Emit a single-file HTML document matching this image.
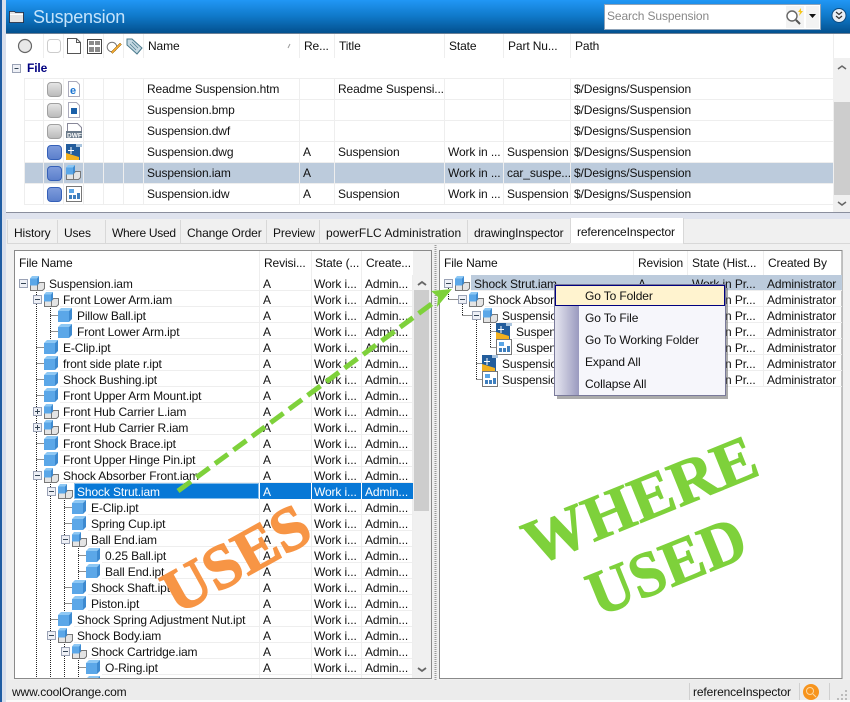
<!DOCTYPE html>
<html><head><meta charset="utf-8"><title>Suspension</title>
<style>
html,body{margin:0;padding:0;background:#f0f0f0;width:850px;height:702px;overflow:hidden}
svg{display:block}
text{font-family:"Liberation Sans",sans-serif;font-size:12px;fill:#111;letter-spacing:-.12px}
.w text{fill:#fff}
.ln{stroke:#eeeeee;stroke-width:1;fill:none}
.dot{stroke:#222;stroke-width:1;stroke-dasharray:1 1;fill:none}
</style></head><body>
<svg width="850" height="702" viewBox="0 0 850 702" xmlns="http://www.w3.org/2000/svg">
<defs>
<linearGradient id="tb" x1="0" y1="0" x2="0" y2="1"><stop offset="0" stop-color="#2197f5"/><stop offset=".5" stop-color="#0f78c8"/><stop offset="1" stop-color="#03508e"/></linearGradient>
<linearGradient id="gr" x1="0" y1="0" x2="0" y2="1"><stop offset="0" stop-color="#e6e6e6"/><stop offset="1" stop-color="#b9b9b9"/></linearGradient>
<linearGradient id="bl" x1="0" y1="0" x2="0" y2="1"><stop offset="0" stop-color="#7f9cdc"/><stop offset="1" stop-color="#5b7fcb"/></linearGradient>
<linearGradient id="gut" x1="0" y1="0" x2="1" y2="0"><stop offset="0" stop-color="#e6e6f0"/><stop offset="1" stop-color="#9a9abf"/></linearGradient>
<clipPath id="cl"><rect x="15" y="251" width="398" height="427"/></clipPath>
<clipPath id="cr"><rect x="440" y="251" width="402" height="427"/></clipPath>
<symbol id="part" width="14" height="14" viewBox="0 0 14 14"><path d="M0 3h11v11H0z" fill="#5ba7e8"/><path d="M0 3 3 0h11l-3 3z" fill="#8ec8f4"/><path d="M11 3l3-3v11l-3 3z" fill="#3d8ad0"/></symbol>
<symbol id="asm" width="15" height="15" viewBox="0 0 15 15"><path d="M.5 8.500h7v6h-7z" fill="#e4e4e4" stroke="#777"/><path d="M7.500 14.500v-6l2-2h5v6l-2 2z" fill="#e4e4e4" stroke="#777"/><path d="M0 2.500h7v7H0z" fill="#5ba7e8"/><path d="M0 2.500 2 0h7L7 2.500z" fill="#8ec8f4"/><path d="M7 2.500 9 0v7L7 9.500z" fill="#3d8ad0"/></symbol>
<symbol id="dwg" width="16" height="16" viewBox="0 0 16 16"><path d="M0 0h14v16H0z" fill="#235d9c"/><path d="M0 16V9l13 4v3z" fill="#f2b01e"/><path d="M5 3v7M2 6.500h6" stroke="#fff"/><path d="M10 0h6v3h-6z" fill="#a9c4de"/></symbol>
<symbol id="idw" width="16" height="16" viewBox="0 0 16 16"><path d="M.5.500h15v15H.5z" fill="#fff" stroke="#777"/><path d="M3 3h5v4H3z" fill="#5aa5e6"/><path d="M3 9h3v4H3zM7 9h3v4H7zM11 7h3v6h-3z" fill="#3f7fbe"/></symbol>
<symbol id="minus" width="9" height="9" viewBox="0 0 9 9"><rect x=".5" y=".5" width="8" height="8" fill="#eef0f6" stroke="#9aa2b5"/><path d="M2 4.500h5" stroke="#345"/></symbol>
<symbol id="plus" width="9" height="9" viewBox="0 0 9 9"><rect x=".5" y=".5" width="8" height="8" fill="#eef0f6" stroke="#9aa2b5"/><path d="M2 4.500h5M4.500 2v5" stroke="#345"/></symbol>
</defs>

<!-- frame -->
<rect width="850" height="702" fill="#f0f0f0"/>
<rect x="0" y="0" width="6" height="702" fill="#d9dfec"/>
<rect x="0" y="0" width="2" height="702" fill="#1f5da3"/>
<rect x="6" y="213" width="844" height="6" fill="#dfe3ee"/>

<!-- title bar -->
<rect x="6" y="0" width="844" height="33" fill="url(#tb)"/>
<rect x="6" y="33" width="844" height="1" fill="#6b7f95"/>
<path d="M9.500 11.500h5l1 1h8v10h-14z" fill="#e4e4e4" stroke="#223" stroke-width=".8"/>
<path d="M10 14.500h13" stroke="#fff"/>
<text x="33" y="23" style="font-size:18px;letter-spacing:-.2px;fill:#c4e3fb">Suspension</text>
<rect x="604.500" y="4.500" width="216" height="25" fill="#fff" stroke="#8fa3b8"/>
<text x="607" y="20" style="fill:#888">Search Suspension</text>
<rect x="786" y="6" width="18" height="22" fill="#f3f3f3"/>
<circle cx="792" cy="16" r="5" fill="#fff" stroke="#666" stroke-width="1.400"/>
<path d="M796 20l4 4" stroke="#555" stroke-width="2"/>
<path d="M801 8l-3 4h2l-1 4 4-5h-2z" fill="#f5c518"/>
<rect x="806" y="6" width="13" height="22" fill="#f3f3f3"/>
<path d="M809 14h7l-3.500 4z" fill="#111"/>
<circle cx="839" cy="15.500" r="7" fill="#e8eef5" stroke="#0b4a80"/>
<path d="M836 12l3 2.500 3-2.500M836 16l3 2.500 3-2.500" fill="none" stroke="#333" stroke-width="1.200"/>

<!-- top list -->
<rect x="6" y="34" width="827" height="178" fill="#fff"/>
<rect x="833" y="34" width="17" height="24" fill="#fff"/>
<rect x="833" y="58" width="17" height="154" fill="#f0f0f0"/>
<rect x="834" y="102" width="16" height="93" fill="#cdcdcd"/>
<path d="M838 69l4-3 4 3M838 202l4 3 4-3" fill="none" stroke="#666" stroke-width="1.500"/>
<rect x="6" y="212" width="844" height="1" fill="#8a8f9e"/>
<path class="ln" d="M43.500 34v24M63.500 34v24M83.500 34v24M103.500 34v24M123.500 34v24M143.500 34v24M299.500 34v24M334.500 34v24M444.500 34v24M503.500 34v24M570.500 34v24M833.500 34v24"/>
<circle cx="25" cy="46" r="6.500" fill="#e8e8e8" stroke="#666" stroke-width="1.200"/>
<rect x="47.500" y="39.500" width="13" height="13" rx="3" fill="#fff" stroke="#ccc"/>
<path d="M67.500 38.500h9l4 4v11h-13z" fill="#fff" stroke="#555"/><path d="M76.500 38.500v4h4" fill="none" stroke="#555"/>
<rect x="87.500" y="39.500" width="14" height="14" fill="#fff" stroke="#444"/><path d="M89 41h5v4h-5zM95 41h5v4h-5zM89 47h5v5h-5zM95 47h5v5h-5z" fill="#8a8a8a"/>
<circle cx="112" cy="47" r="4.800" fill="#fff" stroke="#777"/><path d="M111 52l9-9 1.500 1.500-9 9z" fill="#f0a830" stroke="#8a5c10" stroke-width=".5"/>
<path d="M127 39h5l10 9-5 6-10-9z" fill="#c4d8e2" stroke="#4a7a8c"/><path d="M130 44l6 6M132 42l6 6" stroke="#4a7a8c" stroke-width=".7"/>
<text x="148" y="50">Name</text><path d="M288 48l2-4" stroke="#999"/>
<text x="304" y="50">Re...</text><text x="339" y="50">Title</text><text x="449" y="50">State</text><text x="508" y="50">Part Nu...</text><text x="575" y="50">Path</text>
<rect x="12.500" y="64.500" width="8" height="8" fill="#eef0f6" stroke="#9aa2b5"/><path d="M14.500 68.500h4" stroke="#345"/>
<text x="27" y="72" style="font-weight:bold;fill:#000080">File</text>
<rect x="24" y="163" width="809" height="20" fill="#bccbdc"/>
<path class="ln" d="M24 78.500h809M24 99.500h809M24 120.500h809M24 141.500h809M24 162.500h809M24 183.500h809M24 204.500h809"/>
<path class="ln" d="M24.500 79v125M43.500 79v125M63.500 79v125M83.500 79v125M103.500 79v125M123.500 79v125M143.500 79v125M299.500 79v125M334.500 79v125M444.500 79v125M503.500 79v125M570.500 79v125"/>
<g stroke-width="1">
<rect x="47.500" y="82.500" width="14" height="14" rx="3.500" fill="url(#gr)" stroke="#a0a0a0"/>
<rect x="47.500" y="103.500" width="14" height="14" rx="3.500" fill="url(#gr)" stroke="#a0a0a0"/>
<rect x="47.500" y="124.500" width="14" height="14" rx="3.500" fill="url(#gr)" stroke="#a0a0a0"/>
<rect x="47.500" y="145.500" width="14" height="14" rx="3.500" fill="url(#bl)" stroke="#3560b8"/>
<rect x="47.500" y="166.500" width="14" height="14" rx="3.500" fill="url(#bl)" stroke="#3560b8"/>
<rect x="47.500" y="187.500" width="14" height="14" rx="3.500" fill="url(#bl)" stroke="#3560b8"/>
</g>
<path d="M68.500 81.500h8l3 3v12h-11z" fill="#fff" stroke="#aab"/><text x="70" y="94" style="font-size:11px;font-weight:bold;fill:#1a73d0">e</text>
<path d="M68.500 102.500h8l3 3v12h-11z" fill="#fff" stroke="#aab"/><rect x="71" y="108" width="6" height="6" fill="#1a5fa8"/>
<path d="M67.500 123.500h10l4 4v10h-14z" fill="#fff" stroke="#889"/><rect x="66" y="131" width="16" height="7" fill="#6a7a8a"/><text x="67" y="137.500" style="font-size:6.500px;font-weight:bold;fill:#fff;letter-spacing:0">DWF</text>
<use href="#dwg" x="66" y="144"/>
<use href="#asm" x="66" y="165"/>
<use href="#idw" x="66" y="186"/>
<text x="147" y="93">Readme Suspension.htm</text><text x="338" y="93">Readme Suspensi...</text><text x="574" y="93">$/Designs/Suspension</text>
<text x="147" y="114">Suspension.bmp</text><text x="574" y="114">$/Designs/Suspension</text>
<text x="147" y="135">Suspension.dwf</text><text x="574" y="135">$/Designs/Suspension</text>
<text x="147" y="156">Suspension.dwg</text><text x="303" y="156">A</text><text x="338" y="156">Suspension</text><text x="448" y="156">Work in ...</text><text x="507" y="156">Suspension</text><text x="574" y="156">$/Designs/Suspension</text>
<text x="147" y="177">Suspension.iam</text><text x="303" y="177">A</text><text x="448" y="177">Work in ...</text><text x="507" y="177">car_suspe...</text><text x="574" y="177">$/Designs/Suspension</text>
<text x="147" y="198">Suspension.idw</text><text x="303" y="198">A</text><text x="338" y="198">Suspension</text><text x="448" y="198">Work in ...</text><text x="507" y="198">Suspension</text><text x="574" y="198">$/Designs/Suspension</text>

<!-- tabs -->
<rect x="7" y="219" width="843" height="24" fill="#f0f0f0"/>
<rect x="570" y="218" width="113" height="25" fill="#fff"/>
<path d="M7.500 220v23M57.500 220v23M105.500 220v23M180.500 220v23M266.500 220v23M319.500 220v23M467.500 220v23M570.500 218v25M683.500 218v25" stroke="#d8d8d8" fill="none"/>
<path d="M7 243.500h563M683 243.500h167" stroke="#d8d8d8"/>
<text x="14" y="237">History</text><text x="64" y="237">Uses</text><text x="112" y="237" style="letter-spacing:-.3px">Where Used</text><text x="187" y="237">Change Order</text><text x="273" y="237">Preview</text><text x="326" y="237" style="letter-spacing:.05px">powerFLC Administration</text><text x="474" y="237">drawingInspector</text><text x="577" y="236">referenceInspector</text>

<!-- left panel -->
<rect x="14.500" y="250.500" width="417" height="428" fill="#fff" stroke="#8a8a8a"/>
<rect x="413" y="251" width="18" height="427" fill="#f0f0f0"/>
<rect x="414" y="290" width="15" height="221" fill="#cdcdcd"/>
<path d="M418 285l4-3 4 3M418 668l4 3 4-3" fill="none" stroke="#666" stroke-width="1.800"/>
<path d="M435.500 245v435" stroke="#9a9a9a" stroke-dasharray="1 1" stroke-width="2"/>

<g clip-path="url(#cl)">
<path class="ln" d="M259.500 251v427M311.500 251v427M361.500 251v427M412.500 251v427"/>
<path class="ln" d="M46 290.500h366M60 306.500h352M74 322.500h338M74 338.500h338M60 354.500h352M60 370.500h352M60 386.500h352M60 402.500h352M60 418.500h352M60 434.500h352M60 450.500h352M60 466.500h352M60 482.500h352M74 498.500h338M88 514.500h324M88 530.500h324M88 546.500h324M102 562.500h310M102 578.500h310M88 594.500h324M88 610.500h324M74 626.500h338M74 642.500h338M88 658.500h324M102 674.500h310"/>
<rect x="74" y="483" width="339" height="16" fill="#0878d6"/>
<rect x="74.500" y="483.500" width="184" height="15" fill="none" stroke="#fff" stroke-dasharray="1 1"/>
<path d="M259.500 483v16M311.500 483v16M361.500 483v16" stroke="#fff"/>
<path class="dot" d="M36.500 288v396M50.500 304v43M50.500 480v200M64.500 496v115M64.500 640v40M78.500 544v35M78.500 656v24"/>
<path class="dot" d="M50.500 315.500h8M50.500 331.500h8M36.500 347.500h8M36.500 363.500h8M36.500 379.500h8M36.500 395.500h8M36.500 411.500h4M36.500 427.500h4M36.500 443.500h8M36.500 459.500h8M36.500 475.500h4M64.500 507.500h8M64.500 523.500h8M64.500 539.500h4M78.500 555.500h8M78.500 571.500h8M64.500 587.500h8M64.500 603.500h8M50.500 619.500h8M50.500 635.500h4M64.500 651.500h4M78.500 667.500h8"/>
<use href="#asm" x="30" y="276"/><use href="#minus" x="19" y="279"/>
<use href="#asm" x="44" y="292"/><use href="#minus" x="33" y="295"/>
<use href="#part" x="58" y="308"/><use href="#part" x="58" y="324"/>
<use href="#part" x="44" y="340"/><use href="#part" x="44" y="356"/><use href="#part" x="44" y="372"/><use href="#part" x="44" y="388"/>
<use href="#asm" x="44" y="404"/><use href="#plus" x="33" y="407"/>
<use href="#asm" x="44" y="420"/><use href="#plus" x="33" y="423"/>
<use href="#part" x="44" y="436"/><use href="#part" x="44" y="452"/>
<use href="#asm" x="44" y="468"/><use href="#minus" x="33" y="471"/>
<use href="#asm" x="58" y="484"/><use href="#minus" x="47" y="487"/>
<use href="#part" x="72" y="500"/><use href="#part" x="72" y="516"/>
<use href="#asm" x="72" y="532"/><use href="#minus" x="61" y="535"/>
<use href="#part" x="86" y="548"/><use href="#part" x="86" y="564"/>
<use href="#part" x="72" y="580"/><use href="#part" x="72" y="596"/>
<use href="#part" x="58" y="612"/>
<use href="#asm" x="58" y="628"/><use href="#minus" x="47" y="631"/>
<use href="#asm" x="72" y="644"/><use href="#minus" x="61" y="647"/>
<use href="#part" x="86" y="660"/><use href="#part" x="86" y="676"/>
<text x="49" y="288">Suspension.iam</text>
<text x="63" y="304">Front Lower Arm.iam</text>
<text x="77" y="320">Pillow Ball.ipt</text>
<text x="77" y="336">Front Lower Arm.ipt</text>
<text x="63" y="352">E-Clip.ipt</text>
<text x="63" y="368">front side plate r.ipt</text>
<text x="63" y="384">Shock Bushing.ipt</text>
<text x="63" y="400">Front Upper Arm Mount.ipt</text>
<text x="63" y="416">Front Hub Carrier L.iam</text>
<text x="63" y="432">Front Hub Carrier R.iam</text>
<text x="63" y="448">Front Shock Brace.ipt</text>
<text x="63" y="464">Front Upper Hinge Pin.ipt</text>
<text x="63" y="480">Shock Absorber Front.iam</text>
<g class="w"><text x="77" y="496">Shock Strut.iam</text><text x="263" y="496">A</text><text x="314" y="496">Work i...</text><text x="365" y="496">Admin...</text></g>
<text x="91" y="512">E-Clip.ipt</text>
<text x="91" y="528">Spring Cup.ipt</text>
<text x="91" y="544">Ball End.iam</text>
<text x="105" y="560">0.25 Ball.ipt</text>
<text x="105" y="576">Ball End.ipt</text>
<text x="91" y="592">Shock Shaft.ipt</text>
<text x="91" y="608">Piston.ipt</text>
<text x="77" y="624">Shock Spring Adjustment Nut.ipt</text>
<text x="77" y="640">Shock Body.iam</text>
<text x="91" y="656">Shock Cartridge.iam</text>
<text x="105" y="672">O-Ring.ipt</text>
<text x="263" y="288">A</text><text x="314" y="288">Work i...</text><text x="365" y="288">Admin...</text>
<text x="263" y="304">A</text><text x="314" y="304">Work i...</text><text x="365" y="304">Admin...</text>
<text x="263" y="320">A</text><text x="314" y="320">Work i...</text><text x="365" y="320">Admin...</text>
<text x="263" y="336">A</text><text x="314" y="336">Work i...</text><text x="365" y="336">Admin...</text>
<text x="263" y="352">A</text><text x="314" y="352">Work i...</text><text x="365" y="352">Admin...</text>
<text x="263" y="368">A</text><text x="314" y="368">Work i...</text><text x="365" y="368">Admin...</text>
<text x="263" y="384">A</text><text x="314" y="384">Work i...</text><text x="365" y="384">Admin...</text>
<text x="263" y="400">A</text><text x="314" y="400">Work i...</text><text x="365" y="400">Admin...</text>
<text x="263" y="416">A</text><text x="314" y="416">Work i...</text><text x="365" y="416">Admin...</text>
<text x="263" y="432">A</text><text x="314" y="432">Work i...</text><text x="365" y="432">Admin...</text>
<text x="263" y="448">A</text><text x="314" y="448">Work i...</text><text x="365" y="448">Admin...</text>
<text x="263" y="464">A</text><text x="314" y="464">Work i...</text><text x="365" y="464">Admin...</text>
<text x="263" y="480">A</text><text x="314" y="480">Work i...</text><text x="365" y="480">Admin...</text>
<text x="263" y="512">A</text><text x="314" y="512">Work i...</text><text x="365" y="512">Admin...</text>
<text x="263" y="528">A</text><text x="314" y="528">Work i...</text><text x="365" y="528">Admin...</text>
<text x="263" y="544">A</text><text x="314" y="544">Work i...</text><text x="365" y="544">Admin...</text>
<text x="263" y="560">A</text><text x="314" y="560">Work i...</text><text x="365" y="560">Admin...</text>
<text x="263" y="576">A</text><text x="314" y="576">Work i...</text><text x="365" y="576">Admin...</text>
<text x="263" y="592">A</text><text x="314" y="592">Work i...</text><text x="365" y="592">Admin...</text>
<text x="263" y="608">A</text><text x="314" y="608">Work i...</text><text x="365" y="608">Admin...</text>
<text x="263" y="624">A</text><text x="314" y="624">Work i...</text><text x="365" y="624">Admin...</text>
<text x="263" y="640">A</text><text x="314" y="640">Work i...</text><text x="365" y="640">Admin...</text>
<text x="263" y="656">A</text><text x="314" y="656">Work i...</text><text x="365" y="656">Admin...</text>
<text x="263" y="672">A</text><text x="314" y="672">Work i...</text><text x="365" y="672">Admin...</text>
</g>
<rect x="15" y="251" width="398" height="24" fill="#fff"/>
<path class="ln" d="M259.500 251v24M311.500 251v24M361.500 251v24"/>
<text x="19" y="267">File Name</text><text x="264" y="267">Revisi...</text><text x="315" y="267">State (...</text><text x="366" y="267">Create...</text>

<!-- right panel -->
<rect x="439.500" y="250.500" width="402.500" height="428" fill="#fff" stroke="#8a8a8a"/>
<g clip-path="url(#cr)">
<path class="ln" d="M633.500 251v136M687.500 251v136M763.500 251v136"/>
<path class="ln" d="M471 290.500h372M485 306.500h358M499 322.500h344M513 338.500h330M513 354.500h330M499 370.500h344M499 386.500h344"/>
<rect x="471" y="275" width="372" height="15" fill="#bccbdc"/>
<path class="dot" d="M448.500 288v11M448.500 299.500h10M462.500 304v11M462.500 315.500h10M476.500 320v59M490.500 320v27M490.500 331.500h6M490.500 347.500h6M476.500 363.500h6M476.500 379.500h6"/>
<use href="#asm" x="455" y="276"/><use href="#minus" x="444" y="279"/>
<use href="#asm" x="469" y="292"/><use href="#minus" x="458" y="295"/>
<use href="#asm" x="483" y="308"/><use href="#minus" x="472" y="311"/>
<use href="#dwg" x="496" y="323"/><use href="#idw" x="496" y="339"/>
<use href="#dwg" x="482" y="355"/><use href="#idw" x="482" y="371"/>
<text x="474" y="288">Shock Strut.iam</text>
<text x="488" y="304">Shock Absorber Front.iam</text>
<text x="502" y="320">Suspension.iam</text>
<text x="516" y="336">Suspension.dwg</text>
<text x="516" y="352">Suspension.idw</text>
<text x="502" y="368">Suspension.dwg</text>
<text x="502" y="384">Suspension.idw</text>
<text x="638" y="288">A</text>
<text x="692" y="288">Work in Pr...</text><text x="767" y="288">Administrator</text>
<text x="692" y="304">Work in Pr...</text><text x="767" y="304">Administrator</text>
<text x="692" y="320">Work in Pr...</text><text x="767" y="320">Administrator</text>
<text x="692" y="336">Work in Pr...</text><text x="767" y="336">Administrator</text>
<text x="692" y="352">Work in Pr...</text><text x="767" y="352">Administrator</text>
<text x="692" y="368">Work in Pr...</text><text x="767" y="368">Administrator</text>
<text x="692" y="384">Work in Pr...</text><text x="767" y="384">Administrator</text>
</g>
<text x="444" y="267">File Name</text><text x="638" y="267">Revision</text><text x="692" y="267">State (Hist...</text><text x="768" y="267">Created By</text>

<!-- context menu -->
<rect x="557" y="288" width="171" height="111" fill="#666" opacity=".55"/>
<rect x="554.500" y="284.500" width="171" height="111" fill="#f6f6fb" stroke="#7a7a9a"/>
<rect x="555" y="306" width="24" height="89" fill="url(#gut)"/>
<rect x="555.500" y="285.500" width="169" height="20" fill="#fff3cf" stroke="#000080"/>
<text x="585" y="300">Go To Folder</text>
<text x="585" y="322">Go To File</text>
<text x="585" y="344">Go To Working Folder</text>
<text x="585" y="366">Expand All</text>
<text x="585" y="388">Collapse All</text>

<!-- status bar -->
<rect x="6" y="680" width="844" height="20" fill="#ececec"/>
<rect x="6" y="700" width="844" height="2" fill="#fafafa"/>
<path d="M689.500 683v17M799.500 683v17M829.500 683v17" stroke="#d0d0d0"/>
<text x="12" y="696">www.coolOrange.com</text>
<text x="693" y="696">referenceInspector</text>
<circle cx="811" cy="692" r="8" fill="#f7941d"/>
<circle cx="810" cy="691" r="3.500" fill="none" stroke="#fcd9a4" stroke-width="1"/><path d="M813 694l3 3" stroke="#fcd9a4"/>
<path d="M845 690h2v2h-2zM841 694h2v2h-2zM845 694h2v2h-2zM837 698h2v2h-2zM841 698h2v2h-2zM845 698h2v2h-2z" fill="#bbb"/>

<!-- overlay arrow -->
<path d="M178 491L437 300" stroke="#7ed13b" stroke-width="5" stroke-dasharray="16 7" fill="none"/>
<path d="M431 291L452 289L437 307L438 297z" fill="#7ed13b"/>

<!-- overlay words -->
<text transform="translate(177,615) rotate(-29)" textLength="158" lengthAdjust="spacingAndGlyphs" style="font-family:'Liberation Serif',serif;font-weight:bold;font-size:62px;fill:#f79545;stroke:#f79545;stroke-width:1.500;letter-spacing:0">USES</text>
<text transform="translate(534,566) rotate(-22)" textLength="246" lengthAdjust="spacingAndGlyphs" style="font-family:'Liberation Serif',serif;font-weight:bold;font-size:64px;fill:#7ed13b;stroke:#7ed13b;stroke-width:1;letter-spacing:0">WHERE</text>
<text transform="translate(598,617) rotate(-22)" textLength="165" lengthAdjust="spacingAndGlyphs" style="font-family:'Liberation Serif',serif;font-weight:bold;font-size:64px;fill:#7ed13b;stroke:#7ed13b;stroke-width:1;letter-spacing:0">USED</text>
</svg>
</body></html>
